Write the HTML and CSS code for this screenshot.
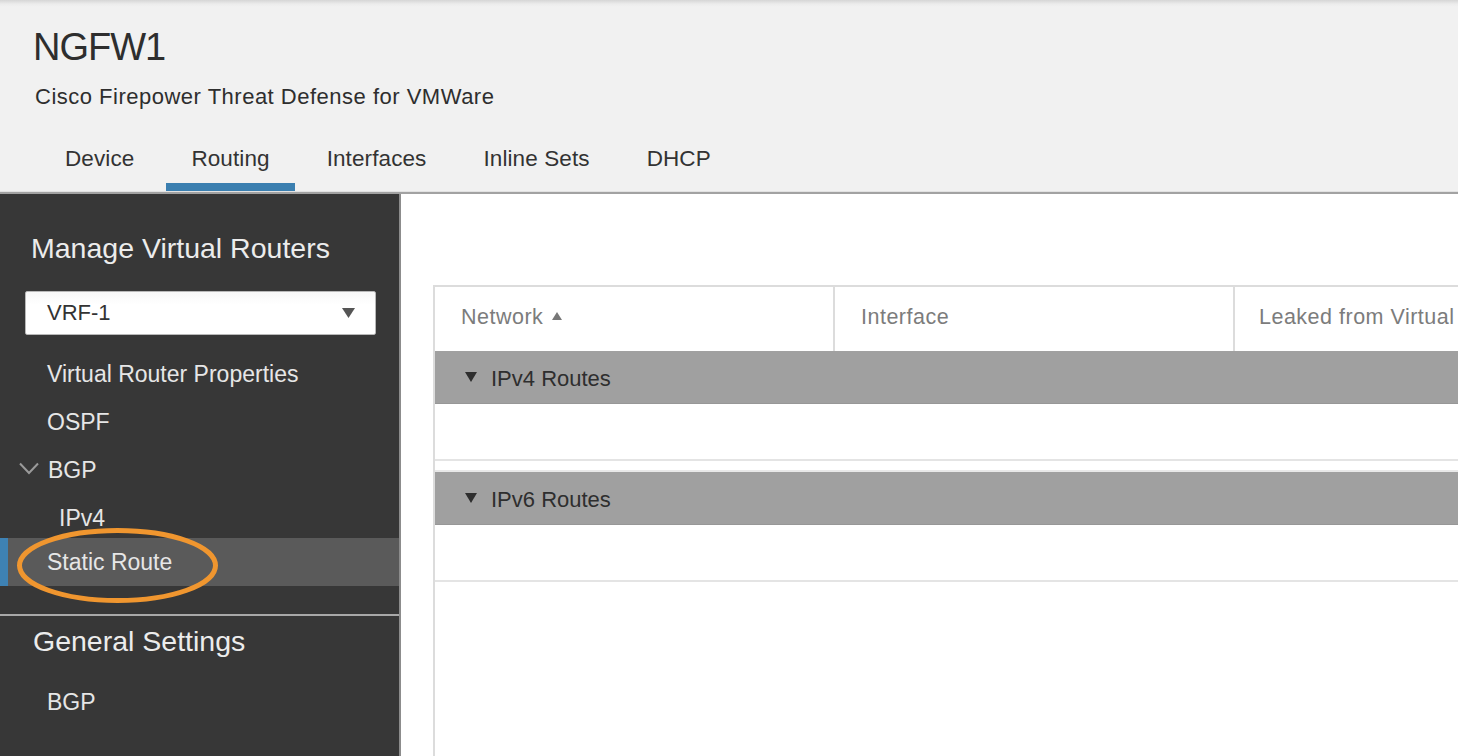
FILE: index.html
```html
<!DOCTYPE html>
<html lang="en">
<head>
<meta charset="utf-8">
<title>NGFW1 - Routing</title>
<link rel="stylesheet" href="styles.css">
</head>
<body>
<header class="topbar">
  <h1 class="device-name">NGFW1</h1>
  <p class="device-model">Cisco Firepower Threat Defense for VMWare</p>
  <nav class="tabs">
    <a class="tab">Device</a>
    <a class="tab active">Routing</a>
    <a class="tab">Interfaces</a>
    <a class="tab">Inline Sets</a>
    <a class="tab">DHCP</a>
  </nav>
</header>
<div class="main">
  <aside class="sidebar">
    <h2 class="side-heading">Manage Virtual Routers</h2>
    <div class="select">
      <span class="select-value">VRF-1</span>
      <svg class="select-arrow" width="13" height="10" viewBox="0 0 13 10"><polygon points="0,0 13,0 6.5,10" fill="#555"/></svg>
    </div>
    <ul class="side-nav">
      <li class="side-item">Virtual Router Properties</li>
      <li class="side-item">OSPF</li>
      <li class="side-item has-caret"><svg class="caret" width="20" height="13" viewBox="0 0 20 13"><polyline points="1,1.5 10,11 19,1.5" fill="none" stroke="#9a9a9a" stroke-width="2"/></svg>BGP</li>
      <li class="side-item sub">IPv4</li>
      <li class="side-item selected">Static Route
        <svg class="highlight" width="201" height="75" viewBox="0 0 201 75"><ellipse cx="100.5" cy="37.5" rx="98" ry="35" fill="none" stroke="#f0962f" stroke-width="5"/></svg>
      </li>
    </ul>
    <div class="side-divider"></div>
    <h2 class="side-heading general">General Settings</h2>
    <ul class="side-nav general-nav">
      <li class="side-item">BGP</li>
    </ul>
  </aside>
  <section class="content">
    <div class="grid">
      <div class="grid-head">
        <div class="col col-network">Network <svg class="sort" width="10" height="8" viewBox="0 0 10 8"><polygon points="0,8 10,8 5,0" fill="#777"/></svg></div>
        <div class="col col-interface">Interface</div>
        <div class="col col-leaked">Leaked from Virtual</div>
      </div>
      <div class="group-row"><svg class="tri" width="12" height="10" viewBox="0 0 12 10"><polygon points="0,0 12,0 6,10" fill="#2e2e2e"/></svg>IPv4 Routes</div>
      <div class="empty-row"></div>
      <div class="spacer-row"></div>
      <div class="group-row"><svg class="tri" width="12" height="10" viewBox="0 0 12 10"><polygon points="0,0 12,0 6,10" fill="#2e2e2e"/></svg>IPv6 Routes</div>
      <div class="empty-row"></div>
    </div>
  </section>
</div>
</body>
</html>
```
FILE: styles.css
```css
* { box-sizing: border-box; }
html, body { margin: 0; padding: 0; }
body {
  width: 1458px;
  height: 756px;
  overflow: hidden;
  font-family: "Liberation Sans", Arial, sans-serif;
  color: #333;
  background: #fff;
}

.topbar {
  height: 194px;
  padding: 27px 0 0 34px;
  background: linear-gradient(#d6d6d6 0, #ececec 4px, #f1f1f1 7px, #f1f1f1 100%);
  border-bottom: 2px solid #a2a2a2;
  box-shadow: inset 0 -1px 0 #e2e2e2;
}
.device-name {
  margin: 0 0 0 -1px;
  font-size: 38px;
  line-height: 40px;
  font-weight: normal;
  letter-spacing: -1px;
  color: #2e2e2e;
}
.device-model {
  margin: 15px 0 0 1px;
  font-size: 22px;
  line-height: 30px;
  letter-spacing: 0.5px;
  color: #2e2e2e;
}
.tabs {
  display: flex;
  gap: 7px;
  margin: 30px 0 0 6px;
}
.tab {
  padding: 2px 25px 9px;
  font-size: 22.5px;
  line-height: 30px;
  letter-spacing: 0.1px;
  color: #333;
  border-bottom: 8px solid transparent;
}
.tab.active { border-bottom-color: #3b7fb0; }

.main {
  display: flex;
  height: 562px;
}

.sidebar {
  position: relative;
  width: 401px;
  flex: none;
  background: #373737;
  border-right: 2px solid #8c8c8c;
  color: #e8e8e8;
}
.side-heading {
  margin: 37px 0 0 31px;
  font-size: 28.5px;
  line-height: 34px;
  font-weight: normal;
  color: #ececec;
}
.side-heading.general { margin: 8px 0 0 33px; }

.select {
  display: flex;
  align-items: center;
  justify-content: space-between;
  width: 351px;
  height: 44px;
  margin: 26px 0 0 25px;
  padding: 0 20px 0 21px;
  background: linear-gradient(#f7f7f7, #fff 30%);
  border: 1px solid #b8b8b8;
  border-radius: 2px;
  color: #333;
  font-size: 22px;
}

.side-nav {
  list-style: none;
  margin: 15px 0 0;
  padding: 0;
}
.side-nav.general-nav { margin-top: 20px; }
.side-item {
  position: relative;
  display: flex;
  align-items: center;
  height: 48px;
  padding-left: 47px;
  font-size: 23px;
  color: #e6e6e6;
}
.side-item.has-caret { padding-left: 19px; }
.side-item .caret { margin: 0 9px 4px 0; }
.side-item.sub {
  height: 44px;
  padding-top: 4px;
  padding-left: 59px;
}
.side-item.selected {
  background: #5a5a5a;
  border-left: 8px solid #3e82b4;
  padding-left: 39px;
}
.highlight {
  position: absolute;
  left: 9px;
  top: -10px;
  overflow: visible;
}
.side-divider {
  height: 2px;
  margin-top: 28px;
  background: #a8a8a8;
}

.content {
  flex: 1;
  min-width: 0;
  overflow: hidden;
  padding: 91px 0 0 32px;
  background: #fff;
}
.grid {
  width: 1100px;
  height: 100%;
  border-left: 2px solid #dcdcdc;
}
.grid-head {
  display: flex;
  height: 66px;
  border-top: 2px solid #dcdcdc;
  color: #7c7c7c;
  font-size: 21.5px;
  letter-spacing: 0.5px;
}
.col {
  display: flex;
  align-items: center;
  padding-left: 26px;
  padding-bottom: 4px;
}
.col-network { width: 398px; }
.col-interface { width: 400px; border-left: 2px solid #dcdcdc; }
.col-leaked { flex: 1; border-left: 2px solid #dcdcdc; padding-left: 24px; white-space: nowrap; }
.sort { margin-left: 9px; margin-top: -2px; }

.group-row {
  display: flex;
  align-items: center;
  height: 53px;
  padding: 3px 0 0 30px;
  background: #a0a0a0;
  border-bottom: 1px solid #979797;
  font-size: 22px;
  color: #2e2e2e;
}
.tri { margin-right: 14px; margin-top: -3px; }
.empty-row {
  height: 57px;
  border-bottom: 2px solid #e4e4e4;
}
.spacer-row {
  height: 11px;
  border-bottom: 2px solid #e8e8e8;
}
```
